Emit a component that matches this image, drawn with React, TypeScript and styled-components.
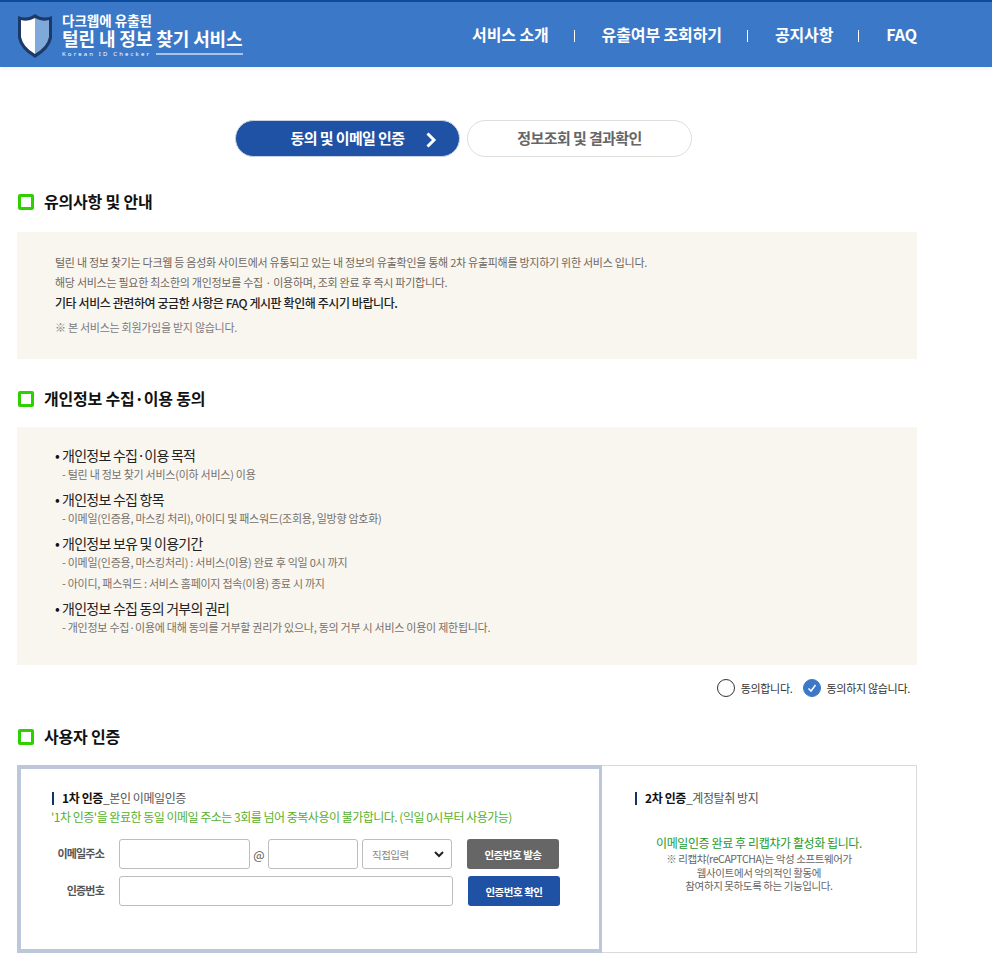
import React from "react";
import styled, { createGlobalStyle } from "styled-components";

const GlobalStyle = createGlobalStyle`
  *, *::before, *::after { box-sizing: border-box; }
  html, body { margin: 0; padding: 0; background: #fff; }
  body {
    font-family: "Noto Sans CJK KR", "Noto Sans", sans-serif;
    color: #333;
    letter-spacing: -0.5px;
  }
`;

const Header = styled.header`
  height: 67px;
  background: #3c78c8;
  border-top: 2px solid #0b4c9c;
  box-shadow: 0 2px 4px rgba(0, 0, 0, 0.06);
  padding: 0 75px 2px 17px;
  display: flex;
  align-items: center;
  justify-content: space-between;
`;

const Logo = styled.a`
  display: flex;
  align-items: center;
  gap: 9px;
  color: #fff;
  padding-top: 4px;
`;

const LogoText = styled.div`
  display: flex;
  flex-direction: column;
`;

const LogoSmall = styled.span`
  font-size: 13.5px;
  font-weight: 700;
  line-height: 15px;
  letter-spacing: 0;
`;

const LogoBig = styled.span`
  font-size: 18px;
  font-weight: 700;
  line-height: 20px;
  letter-spacing: -0.1px;
`;

const LogoSub = styled.span`
  display: flex;
  align-items: center;
  gap: 5px;
  margin-top: 2px;
  font-family: "Noto Sans", sans-serif;
  font-size: 6px;
  line-height: 9px;
  letter-spacing: 2.15px;
  white-space: nowrap;
  &::after {
    content: "";
    flex: 1;
    height: 2px;
    background: #a9c4e8;
  }
`;

const Nav = styled.nav`
  display: flex;
  align-items: center;
`;

const NavItem = styled.a`
  color: #fff;
  font-size: 16px;
  font-weight: 700;
  line-height: 24px;
  letter-spacing: -0.12px;
  & + &::before {
    content: "";
    display: inline-block;
    width: 1px;
    height: 12px;
    background: #fff;
    margin: 0 27px 0 25px;
    vertical-align: -1px;
  }
`;

const Main = styled.main`
  width: 900px;
  margin-left: 17px;
  padding-top: 53px;
`;

const Steps = styled.div`
  display: flex;
  justify-content: center;
  gap: 7px;
  padding-right: 7px;
  margin-bottom: 32px;
`;

const Step = styled.div<{ $active?: boolean }>`
  width: 225px;
  height: 37px;
  padding-bottom: 2px;
  border-radius: 19px;
  display: flex;
  align-items: center;
  justify-content: center;
  position: relative;
  font-size: 15px;
  font-weight: 700;
  letter-spacing: -0.6px;
  background: ${(p) => (p.$active ? "#1f52a5" : "#fff")};
  color: ${(p) => (p.$active ? "#fff" : "#666")};
  border: 1px solid ${(p) => (p.$active ? "#c9d3e6" : "#ddd")};
`;

const StepArrow = styled.svg`
  position: absolute;
  right: 22px;
  top: 11px;
`;

const SectionTitle = styled.h2`
  display: flex;
  align-items: center;
  gap: 10px;
  margin: 0;
  height: 24px;
  font-size: 16px;
  font-weight: 700;
  color: #111;
  letter-spacing: -0.2px;
  &::before {
    content: "";
    width: 16px;
    height: 16px;
    margin: 2px 0 0 1px;
    border: 3px solid #2fd000;
    border-radius: 2px;
  }
`;

const NoticeBox = styled.section<{ $compact?: boolean }>`
  background: #f9f6f0;
  margin-top: ${(p) => (p.$compact ? "17px" : "19px")};
  padding: ${(p) => (p.$compact ? "18px 38px 0" : "20px 38px 0")};
  height: ${(p) => (p.$compact ? "238px" : "127px")};
`;

const NoticeLine = styled.p<{ $strong?: boolean; $muted?: boolean }>`
  margin: ${(p) => (p.$strong ? "1px 0 4px" : "0")};
  font-size: ${(p) => (p.$strong ? "12px" : "11px")};
  line-height: 20px;
  font-weight: ${(p) => (p.$strong ? 500 : 400)};
  color: ${(p) => (p.$strong ? "#222" : p.$muted ? "#7a7a80" : "#6e675f")};
  letter-spacing: ${(p) => (p.$strong ? "-0.42px" : "-0.27px")};
`;

const Spacer = styled.div<{ $h: number }>`
  height: ${(p) => p.$h}px;
`;

const TermTitle = styled.h3`
  margin: 0;
  font-size: 14px;
  font-weight: 400;
  line-height: 20px;
  color: #222;
  letter-spacing: -0.75px;
  &::before {
    content: "•";
    margin-right: 3px;
    color: #111;
  }
`;

const TermBlock = styled.div`
  margin-bottom: 7px;
`;

const TermLine = styled.p<{ $gap?: boolean }>`
  margin: ${(p) => (p.$gap ? "6px" : "2px")} 0 0 7px;
  font-size: 11px;
  line-height: 15px;
  color: #77716a;
  letter-spacing: -0.26px;
`;

const AgreeRow = styled.div`
  display: flex;
  justify-content: flex-end;
  align-items: center;
  gap: 10px;
  height: 46px;
  padding-right: 7px;
  margin-bottom: 13px;
`;

const AgreeOption = styled.label`
  display: flex;
  align-items: center;
  gap: 6px;
  font-size: 11px;
  color: #333;
  letter-spacing: -0.3px;
`;

const AgreeMark = styled.span<{ $on?: boolean }>`
  width: 18px;
  height: 18px;
  border-radius: 50%;
  display: flex;
  align-items: center;
  justify-content: center;
  border: 1px solid ${(p) => (p.$on ? "#3c78c8" : "#333")};
  background: ${(p) => (p.$on ? "#3c78c8" : "#fff")};
`;

const AuthGrid = styled.section`
  display: flex;
  margin-top: 17px;
  height: 188px;
`;

const FirstPanel = styled.div`
  width: 585px;
  border: 4px solid #bcc8da;
  border-right-width: 3px;
  padding: 21px 0 0 31px;
`;

const SecondPanel = styled.div`
  flex: 1;
  border: 1px solid #d9d9d9;
  border-left: 0;
  padding: 24px 0 0 33px;
`;

const PanelTitle = styled.h4`
  margin: 0;
  font-size: 12px;
  line-height: 16px;
  font-weight: 400;
  color: #555;
  letter-spacing: -0.4px;
  display: flex;
  align-items: center;
  b {
    font-weight: 700;
    color: #111;
  }
  &::before {
    content: "";
    width: 2px;
    height: 13px;
    background: #0f3566;
    margin-right: 8px;
  }
`;

const GreenNote = styled.p`
  margin: 2px 0 0 -1px;
  font-size: 12px;
  line-height: 18px;
  color: #56b02a;
  letter-spacing: -0.5px;
`;

const FormGap = styled.div`
  height: 13px;
`;

const FormRow = styled.div`
  display: flex;
  align-items: center;
  height: 30px;
  margin-left: -31px;
  & + & {
    margin-top: 7px;
  }
`;

const FieldLabel = styled.label`
  width: 83px;
  text-align: right;
  font-size: 11px;
  font-weight: 700;
  color: #555;
  letter-spacing: -0.8px;
  margin-right: 15px;
  position: relative;
  top: -1px;
`;

const TextInput = styled.input<{ $w: number }>`
  width: ${(p) => p.$w}px;
  height: 30px;
  padding: 0 8px;
  background: #fff;
  border: 1px solid #bdbdbd;
  border-radius: 3px;
  outline: none;
`;

const AtSign = styled.span`
  width: 18px;
  text-align: center;
  font-size: 12px;
  color: #555;
  letter-spacing: 0;
`;

const SelectBox = styled.div`
  width: 90px;
  height: 30px;
  margin-left: 4px;
  padding: 0 7px 0 9px;
  border: 1px solid #bdbdbd;
  border-radius: 3px;
  display: flex;
  align-items: center;
  justify-content: space-between;
  font-size: 10.5px;
  color: #888;
`;

const ActionButton = styled.button<{ $tone: "gray" | "blue" }>`
  width: 92px;
  height: 30px;
  margin-left: 15px;
  border: 0;
  border-radius: 3px;
  font-family: inherit;
  font-size: 10.5px;
  font-weight: 700;
  letter-spacing: -0.45px;
  color: #fff;
  background: ${(p) => (p.$tone === "gray" ? "#666" : "#1f52a5")};
`;

const CaptchaNote = styled.div`
  margin: 28px 0 0 -33px;
  text-align: center;
`;

const CaptchaHead = styled.p`
  margin: 0;
  font-size: 12px;
  line-height: 18px;
  color: #1d9a2a;
  letter-spacing: -0.4px;
`;

const CaptchaBody = styled.p`
  margin: 0;
  font-size: 10.5px;
  line-height: 13.5px;
  color: #666;
  letter-spacing: -0.4px;
`;

const terms = [
  { title: "개인정보 수집·이용 목적", lines: ["- 털린 내 정보 찾기 서비스(이하 서비스) 이용"] },
  { title: "개인정보 수집 항목", lines: ["- 이메일(인증용, 마스킹 처리), 아이디 및 패스워드(조회용, 일방향 암호화)"] },
  {
    title: "개인정보 보유 및 이용기간",
    lines: ["- 이메일(인증용, 마스킹처리) : 서비스(이용) 완료 후 익일 0시 까지", "- 아이디, 패스워드 : 서비스 홈페이지 접속(이용) 종료 시 까지"],
  },
  {
    title: "개인정보 수집 동의 거부의 권리",
    lines: ["- 개인정보 수집·이용에 대해 동의를 거부할 권리가 있으나, 동의 거부 시 서비스 이용이 제한됩니다."],
  },
];

const ShieldLogo = () => (
  <svg width="36" height="46" viewBox="0 0 36 46">
    <path d="M1 3 Q10 7 18 1 Q26 7 35 3 L35 25 Q33 36 18 45 Q3 36 1 25 Z" fill="#1d3a66" />
    <path d="M4 7 Q11 9 18 5 L18 41 Q6 34 4 24 Z" fill="#fff" />
    <path d="M18 5 Q25 9 32 7 L32 24 Q30 34 18 41 Z" fill="#7fa9da" />
  </svg>
);

export default function App() {
  return (
    <>
      <GlobalStyle />
      <Header>
        <Logo>
          <ShieldLogo />
          <LogoText>
            <LogoSmall>다크웹에 유출된</LogoSmall>
            <LogoBig>털린 내 정보 찾기 서비스</LogoBig>
            <LogoSub>Korean ID Checker</LogoSub>
          </LogoText>
        </Logo>
        <Nav>
          <NavItem>서비스 소개</NavItem>
          <NavItem>유출여부 조회하기</NavItem>
          <NavItem>공지사항</NavItem>
          <NavItem>FAQ</NavItem>
        </Nav>
      </Header>
      <Main>
        <Steps>
          <Step $active>
            동의 및 이메일 인증
            <StepArrow width="12" height="16" viewBox="0 0 12 16">
              <path d="M2.5 1.5 L9 8 L2.5 14.5" fill="none" stroke="#fff" strokeWidth="3" />
            </StepArrow>
          </Step>
          <Step>정보조회 및 결과확인</Step>
        </Steps>

        <SectionTitle>유의사항 및 안내</SectionTitle>
        <NoticeBox>
          <NoticeLine>
            털린 내 정보 찾기는 다크웹 등 음성화 사이트에서 유통되고 있는 내 정보의 유출확인을 통해 2차 유출피해를 방지하기 위한 서비스 입니다.
          </NoticeLine>
          <NoticeLine>해당 서비스는 필요한 최소한의 개인정보를 수집 · 이용하며, 조회 완료 후 즉시 파기합니다.</NoticeLine>
          <NoticeLine $strong>기타 서비스 관련하여 궁금한 사항은 FAQ 게시판 확인해 주시기 바랍니다.</NoticeLine>
          <NoticeLine $muted>※ 본 서비스는 회원가입을 받지 않습니다.</NoticeLine>
        </NoticeBox>

        <Spacer $h={27} />
        <SectionTitle>개인정보 수집·이용 동의</SectionTitle>
        <NoticeBox $compact>
          {terms.map((t) => (
            <TermBlock key={t.title}>
              <TermTitle>{t.title}</TermTitle>
              {t.lines.map((line, i) => (
                <TermLine key={line} $gap={i > 0}>
                  {line}
                </TermLine>
              ))}
            </TermBlock>
          ))}
        </NoticeBox>

        <AgreeRow>
          <AgreeOption>
            <AgreeMark />
            동의합니다.
          </AgreeOption>
          <AgreeOption>
            <AgreeMark $on>
              <svg width="10" height="10" viewBox="0 0 10 10">
                <path d="M1.5 5.5 L4 8 L8.5 2" fill="none" stroke="#fff" strokeWidth="1.5" />
              </svg>
            </AgreeMark>
            동의하지 않습니다.
          </AgreeOption>
        </AgreeRow>

        <SectionTitle>사용자 인증</SectionTitle>
        <AuthGrid>
          <FirstPanel>
            <PanelTitle>
              <b>1차 인증</b>_본인 이메일인증
            </PanelTitle>
            <GreenNote>'1차 인증'을 완료한 동일 이메일 주소는 3회를 넘어 중복사용이 불가합니다. (익일 0시부터 사용가능)</GreenNote>
            <FormGap />
            <FormRow>
              <FieldLabel>이메일주소</FieldLabel>
              <TextInput $w={131} />
              <AtSign>@</AtSign>
              <TextInput $w={90} />
              <SelectBox>
                직접입력
                <svg width="10" height="7" viewBox="0 0 10 7">
                  <path d="M1 1 L5 5 L9 1" fill="none" stroke="#222" strokeWidth="2" />
                </svg>
              </SelectBox>
              <ActionButton $tone="gray">인증번호 발송</ActionButton>
            </FormRow>
            <FormRow>
              <FieldLabel>인증번호</FieldLabel>
              <TextInput $w={334} />
              <ActionButton $tone="blue">인증번호 확인</ActionButton>
            </FormRow>
          </FirstPanel>
          <SecondPanel>
            <PanelTitle>
              <b>2차 인증</b>_계정탈취 방지
            </PanelTitle>
            <CaptchaNote>
              <CaptchaHead>이메일인증 완료 후 리캡챠가 활성화 됩니다.</CaptchaHead>
              <CaptchaBody>
                ※ 리캡챠(reCAPTCHA)는 악성 소프트웨어가
                <br />
                웹사이트에서 악의적인 활동에
                <br />
                참여하지 못하도록 하는 기능입니다.
              </CaptchaBody>
            </CaptchaNote>
          </SecondPanel>
        </AuthGrid>
      </Main>
    </>
  );
}
